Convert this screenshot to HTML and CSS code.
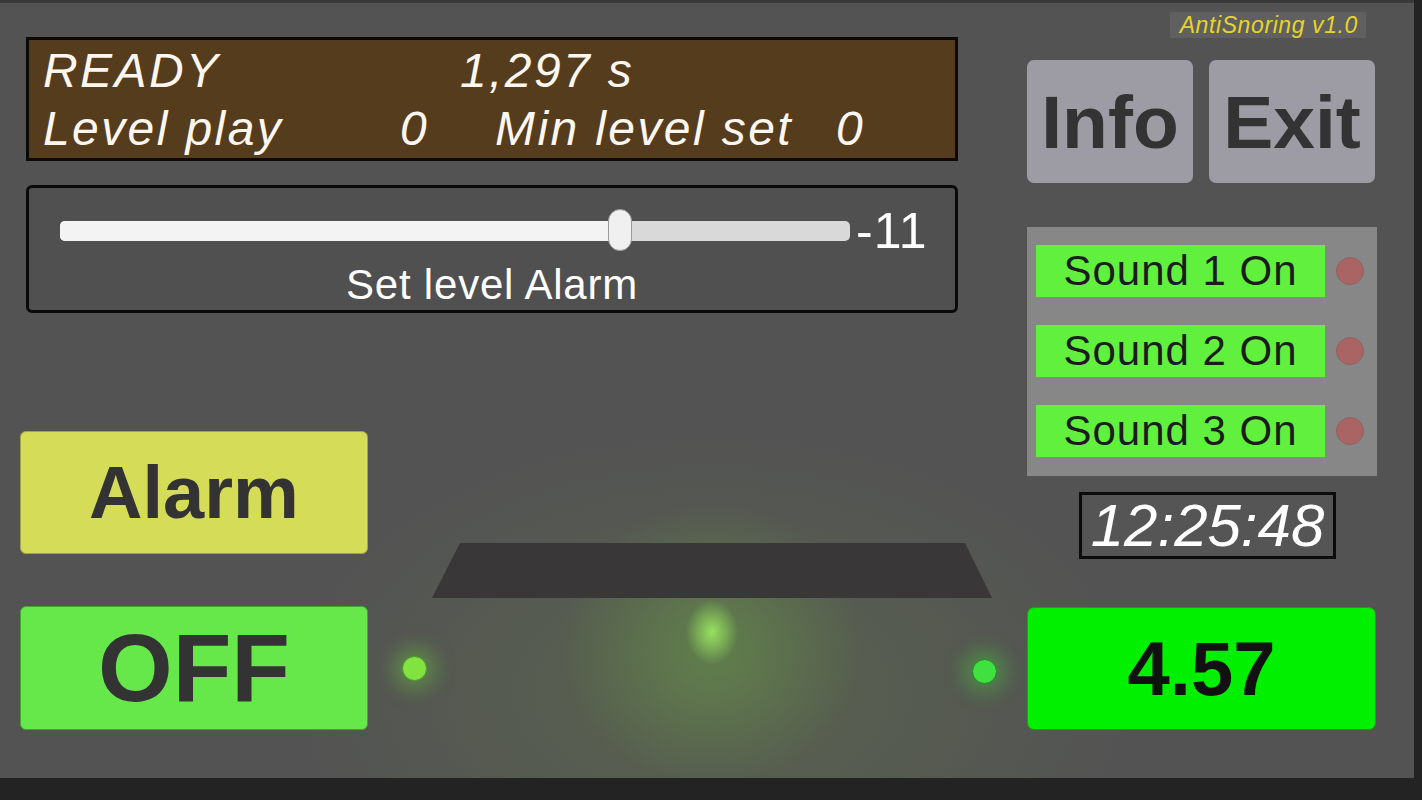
FILE: index.html
```html
<!DOCTYPE html>
<html>
<head>
<meta charset="utf-8">
<link rel="stylesheet" href="styles.css">
</head>
<body>
<div class="screen">
  <div class="left">
    <div class="status">
      <div class="srow"><span class="c-ready">READY</span><span>1,297 s</span></div>
      <div class="srow"><span class="c-lp">Level play</span><span class="c-z">0</span><span class="c-min">Min level set</span><span>0</span></div>
    </div>
    <div class="slider-box">
      <div class="slider-row">
        <div class="track">
          <div class="fill" style="width:560px"></div>
          <div class="knob" style="left:548px"></div>
        </div>
        <span class="slider-val">-11</span>
      </div>
      <div class="slider-label">Set level Alarm</div>
    </div>
    <div class="alarm-row">
      <div class="btn alarm">Alarm</div>
      <div class="trap"></div>
    </div>
    <div class="off-row">
      <div class="btn off">OFF</div>
      <div class="led led-l"></div>
      <div class="gap-area"></div>
      <div class="led led-r"></div>
    </div>
  </div>
  <div class="right">
    <div class="badge">AntiSnoring v1.0</div>
    <div class="top-btns">
      <div class="gbtn">Info</div>
      <div class="gbtn">Exit</div>
    </div>
    <div class="sounds">
      <div class="snd-row"><div class="snd">Sound 1 On</div><div class="dot"></div></div>
      <div class="snd-row"><div class="snd">Sound 2 On</div><div class="dot"></div></div>
      <div class="snd-row"><div class="snd">Sound 3 On</div><div class="dot"></div></div>
    </div>
    <div class="clock">12:25:48</div>
    <div class="value">4.57</div>
  </div>
</div>
</body>
</html>
```
FILE: styles.css
```css
* { box-sizing: border-box; }
html, body { margin: 0; padding: 0; }
body {
  background: #232323;
  width: 1422px;
  height: 800px;
  overflow: hidden;
  font-family: "Liberation Sans", Arial, sans-serif;
}
.screen {
  width: 1414px;
  height: 778px;
  border-top: 3px solid #3a3a3a;
  display: flex;
  padding-left: 20px;
  background:
    radial-gradient(ellipse 26px 32px at 712px 629px, rgba(150,225,95,1), rgba(150,225,95,0) 100%),
    radial-gradient(ellipse 150px 140px at 712px 640px, rgba(110,175,70,0.4), rgba(110,175,70,0) 100%),
    radial-gradient(ellipse 420px 260px at 712px 690px, rgba(100,130,70,0.35), rgba(100,130,70,0) 100%),
    #535353;
}
.left {
  width: 980px;
  display: flex;
  flex-direction: column;
}
.status {
  margin-top: 34px;
  margin-left: 6px;
  width: 932px;
  height: 124px;
  border: 3px solid #0c0a08;
  background: #553c1d;
  padding: 2px 0 0 14px;
  color: #fbf7f0;
  font-style: italic;
  font-size: 48px;
  letter-spacing: 2.4px;
}
.srow { display: flex; height: 58px; line-height: 58px; white-space: nowrap; }
.c-ready { width: 417px; }
.c-lp { width: 357px; }
.c-z { width: 95px; }
.c-min { width: 341px; }

.slider-box {
  margin-top: 24px;
  margin-left: 6px;
  width: 932px;
  height: 128px;
  border: 3px solid #0a0a0a;
  border-radius: 6px;
  background: #505050;
  display: flex;
  flex-direction: column;
}
.slider-row {
  display: flex;
  align-items: center;
  height: 46px;
  margin-top: 20px;
  padding-left: 31px;
}
.track {
  position: relative;
  width: 790px;
  height: 20px;
  border-radius: 5px;
  background: #d9d9d9;
}
.fill {
  height: 20px;
  border-radius: 5px 0 0 5px;
  background: #f3f3f3;
}
.knob {
  position: absolute;
  top: -12px;
  width: 24px;
  height: 42px;
  border-radius: 12px;
  background: #f0f0f0;
  border: 1px solid #9a9a9a;
}
.slider-val {
  margin-left: 6px;
  color: #fff;
  font-size: 50px;
  line-height: 46px;
  letter-spacing: 1px;
}
.slider-label {
  margin-top: 7px;
  text-align: center;
  color: #fff;
  font-size: 42px;
  line-height: 48px;
  letter-spacing: 0.8px;
}

.alarm-row {
  margin-top: 118px;
  height: 167px;
  display: flex;
}
.btn {
  width: 348px;
  display: flex;
  align-items: center;
  justify-content: center;
  border-radius: 6px;
  font-weight: bold;
  color: #333333;
}
.alarm {
  height: 123px;
  background: #d4dc58;
  border: 1px solid #a0a640;
  font-size: 74px;
}
.trap {
  align-self: flex-end;
  margin-left: 64px;
  width: 560px;
  height: 55px;
  background: #393737;
  clip-path: polygon(28px 0, 533px 0, 560px 100%, 0 100%);
}
.off-row {
  margin-top: 8px;
  height: 124px;
  display: flex;
  align-items: center;
}
.off {
  height: 124px;
  background: #66e84b;
  border: 1px solid #3fa82c;
  font-size: 96px;
}
.led {
  width: 25px;
  height: 25px;
  border-radius: 50%;
}
.led-l {
  margin-left: 34px;
  background: #80e33f;
  border: 1px solid #4f9a24;
  box-shadow: 0 0 18px 10px rgba(110,210,60,0.35);
}
.gap-area { width: 545px; }
.led-r {
  margin-top: 6px;
  background: #3fe03f;
  border: 1px solid #248a24;
  box-shadow: 0 0 18px 10px rgba(70,210,60,0.35);
}

.right {
  width: 350px;
  margin-left: 27px;
  display: flex;
  flex-direction: column;
}
.badge {
  align-self: flex-end;
  margin-top: 9px;
  margin-right: 11px;
  height: 26px;
  padding: 0 8px 0 10px;
  background: #606060;
  color: #e6d42a;
  font-style: italic;
  font-size: 23px;
  line-height: 26px;
  letter-spacing: 0.6px;
}
.top-btns {
  margin-top: 22px;
  display: flex;
  gap: 16px;
}
.gbtn {
  width: 166px;
  height: 123px;
  border-radius: 7px;
  background: #9d9ca5;
  display: flex;
  align-items: center;
  justify-content: center;
  font-weight: bold;
  font-size: 75px;
  color: #333333;
}
.sounds {
  margin-top: 44px;
  height: 249px;
  background: #878787;
  padding: 18px 0 0 9px;
  display: flex;
  flex-direction: column;
  gap: 28px;
}
.snd-row { display: flex; align-items: center; }
.snd {
  width: 289px;
  height: 52px;
  background: #62f03f;
  color: #1c1c1c;
  font-size: 42px;
  line-height: 52px;
  text-align: center;
  letter-spacing: 1px;
}
.dot {
  margin-left: 11px;
  width: 28px;
  height: 28px;
  border-radius: 50%;
  background: #aa6464;
  border: 1px solid #946060;
}
.clock {
  margin-top: 16px;
  margin-left: 52px;
  width: 257px;
  height: 67px;
  border: 3px solid #0c0c0c;
  background: #555555;
  color: #fff;
  font-style: italic;
  font-size: 60px;
  line-height: 61px;
  text-align: center;
}
.value {
  margin-top: 48px;
  width: 349px;
  height: 123px;
  border-radius: 7px;
  background: #00f000;
  border: 1px solid #2c9a18;
  display: flex;
  align-items: center;
  justify-content: center;
  font-weight: bold;
  font-size: 76px;
  color: #111;
}
```
